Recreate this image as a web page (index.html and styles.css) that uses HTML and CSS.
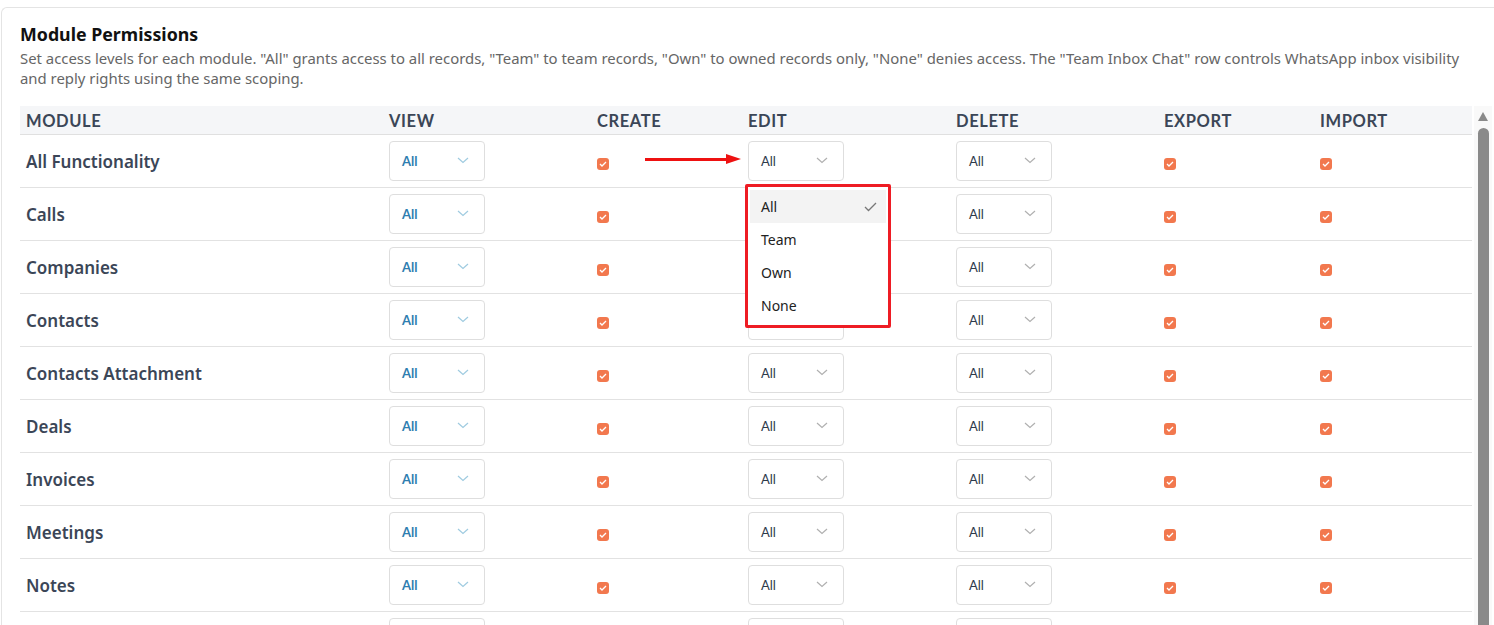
FILE: index.html
```html
<!DOCTYPE html>
<html lang="en">
<head>
    <meta charset="UTF-8">
    <meta name="viewport" content="width=device-width, initial-scale=1.0">
    <title>Module Permissions</title>
    <link rel="stylesheet" href="styles.css">
</head>
<body>
    <div class="card">
        <h2 class="title">Module Permissions</h2>
        <p class="desc">Set access levels for each module. "All" grants access to all records, "Team" to team records, "Own" to owned records only, "None" denies access. The "Team Inbox Chat" row controls WhatsApp inbox visibility<br>and reply rights using the same scoping.</p>

        <div class="table-wrap">
            <div class="perm-table" id="perm-table">
                <div class="row head">
                    <div class="cell">Module</div>
                    <div class="cell">View</div>
                    <div class="cell">Create</div>
                    <div class="cell">Edit</div>
                    <div class="cell">Delete</div>
                    <div class="cell">Export</div>
                    <div class="cell">Import</div>
                </div>
                <!-- rows are added by the script below -->
            </div>
            <div class="scrollbar">
                <div class="scroll-arrow"></div>
                <div class="scroll-thumb"></div>
            </div>
        </div>
    </div>

    <script>
        const modules = ['All Functionality', 'Calls', 'Companies', 'Contacts', 'Contacts Attachment',
            'Deals', 'Invoices', 'Meetings', 'Notes', 'Products'];

        const chevron = '<svg class="chev" width="12" height="7" viewBox="0 0 12 7"><path d="M1 1l5 4.5L11 1" fill="none" stroke="currentColor" stroke-width="1.2"/></svg>';
        const check = '<span class="check"><svg width="8" height="6" viewBox="0 0 8 6"><path d="M1 3l2 2 4-4" fill="none" stroke="#fff" stroke-width="1.3"/></svg></span>';

        function select(kind) {
            return `<div class="select ${kind}"><span>All</span>${chevron}</div>`;
        }

        const table = document.getElementById('perm-table');
        modules.forEach((name, i) => {
            const row = document.createElement('div');
            row.className = 'row';
            let editCell = select('plain');
            if (i === 0) {
                editCell = `<div class="pop-anchor">
                    <div class="arrow"></div>
                    ${select('plain')}
                    <div class="menu">
                        <div class="opt active">All<svg width="13" height="10" viewBox="0 0 13 10"><path d="M1 5l3.5 3.5L12 1" fill="none" stroke="#777" stroke-width="1.3"/></svg></div>
                        <div class="opt">Team</div>
                        <div class="opt">Own</div>
                        <div class="opt">None</div>
                    </div>
                </div>`;
            }
            row.innerHTML = `
                <div class="cell name">${name}</div>
                <div class="cell">${select('blue')}</div>
                <div class="cell">${check}</div>
                <div class="cell">${editCell}</div>
                <div class="cell">${select('plain')}</div>
                <div class="cell">${check}</div>
                <div class="cell">${check}</div>
            `;
            table.appendChild(row);
        });
    </script>
</body>
</html>
```

FILE: styles.css
```css
body {
    margin: 0;
    font-family: "Noto Sans", Lato, sans-serif;
    background-color: #fff;
    overflow: hidden;
    height: 625px;
}
.card {
    margin: 7px -20px 0 1px;
    border-top: 1px solid #e4e4e4;
    border-left: 1px solid #e4e4e4;
    border-radius: 6px 0 0 0;
    padding: 14px 0 0 18px;
}
.title {
    margin: 0;
    font-size: 17.8px;
    line-height: 24px;
    font-weight: 700;
    color: #111;
}
.desc {
    margin: 3px 0 0;
    font-size: 14.9px;
    line-height: 19.5px;
    color: #666;
}
.table-wrap {
    display: flex;
    gap: 2px;
    margin-top: 18px;
}
.perm-table {
    width: 1452px;
}
.row {
    display: grid;
    grid-template-columns: 363px 208px 151px 208px 208px 156px 158px;
    height: 53px;
    border-bottom: 1px solid #e2e2e2;
    box-sizing: border-box;
    align-items: center;
}
.row.head {
    height: 29px;
    background-color: #f5f6f8;
    border-bottom-color: #e0e0e0;
}
.head .cell {
    font-family: Lato, "Noto Sans", sans-serif;
    text-transform: uppercase;
    font-weight: 700;
    font-size: 16.5px;
    letter-spacing: 0.6px;
    color: #3b4657;
    padding-top: 1px;
}
.cell {
    padding-left: 6px;
}
.cell.name {
    font-size: 17px;
    font-weight: 600;
    color: #3b4657;
}
.select {
    width: 96px;
    height: 40px;
    box-sizing: border-box;
    border: 1px solid #dedede;
    border-radius: 4px;
    display: flex;
    align-items: center;
    justify-content: space-between;
    padding: 0 15px 0 12px;
    font-family: Lato, "Noto Sans", sans-serif;
    font-size: 13px;
    font-weight: 700;
    background: #fff;
}
.select.blue {
    color: #2f7eb0;
}
.select.blue .chev {
    color: #9fcbe0;
}
.select.plain {
    color: #2e3a4c;
    font-weight: 400;
}
.select.plain .chev {
    color: #b0b0b0;
}
.chev {
    margin-top: -2px;
}
.check {
    display: inline-flex;
    width: 12px;
    height: 12px;
    border-radius: 3px;
    background-color: #f2784e;
    align-items: center;
    justify-content: center;
    margin-top: 5px;
}
.pop-anchor {
    position: relative;
    width: 96px;
}
.arrow {
    position: absolute;
    left: -103px;
    top: 17px;
    width: 82px;
    height: 3px;
    background: #ee1111;
}
.arrow::after {
    content: "";
    position: absolute;
    right: -14px;
    top: -4px;
    border-left: 15px solid #ee1111;
    border-top: 5.5px solid transparent;
    border-bottom: 5.5px solid transparent;
}
.menu {
    position: absolute;
    left: -3px;
    top: 43px;
    width: 146px;
    height: 144px;
    box-sizing: border-box;
    border: 3px solid #ee1c24;
    border-radius: 2px;
    background: #fff;
    padding: 3px 2px;
    z-index: 2;
}
.opt {
    height: 33px;
    display: flex;
    align-items: center;
    justify-content: space-between;
    padding: 0 9px 0 11px;
    font-size: 14px;
    color: #222;
}
.opt.active {
    background-color: #f3f3f3;
}
.scrollbar {
    width: 18px;
    background-color: #f9f9f9;
    display: flex;
    flex-direction: column;
    align-items: center;
    height: 520px;
}
.scroll-arrow {
    margin-top: 6px;
    border-bottom: 9px solid #8a8a8a;
    border-left: 5.5px solid transparent;
    border-right: 5.5px solid transparent;
}
.scroll-thumb {
    margin-top: 7px;
    width: 11px;
    flex: 1;
    background-color: #8a8a8a;
    border-radius: 6px 6px 0 0;
}
```
